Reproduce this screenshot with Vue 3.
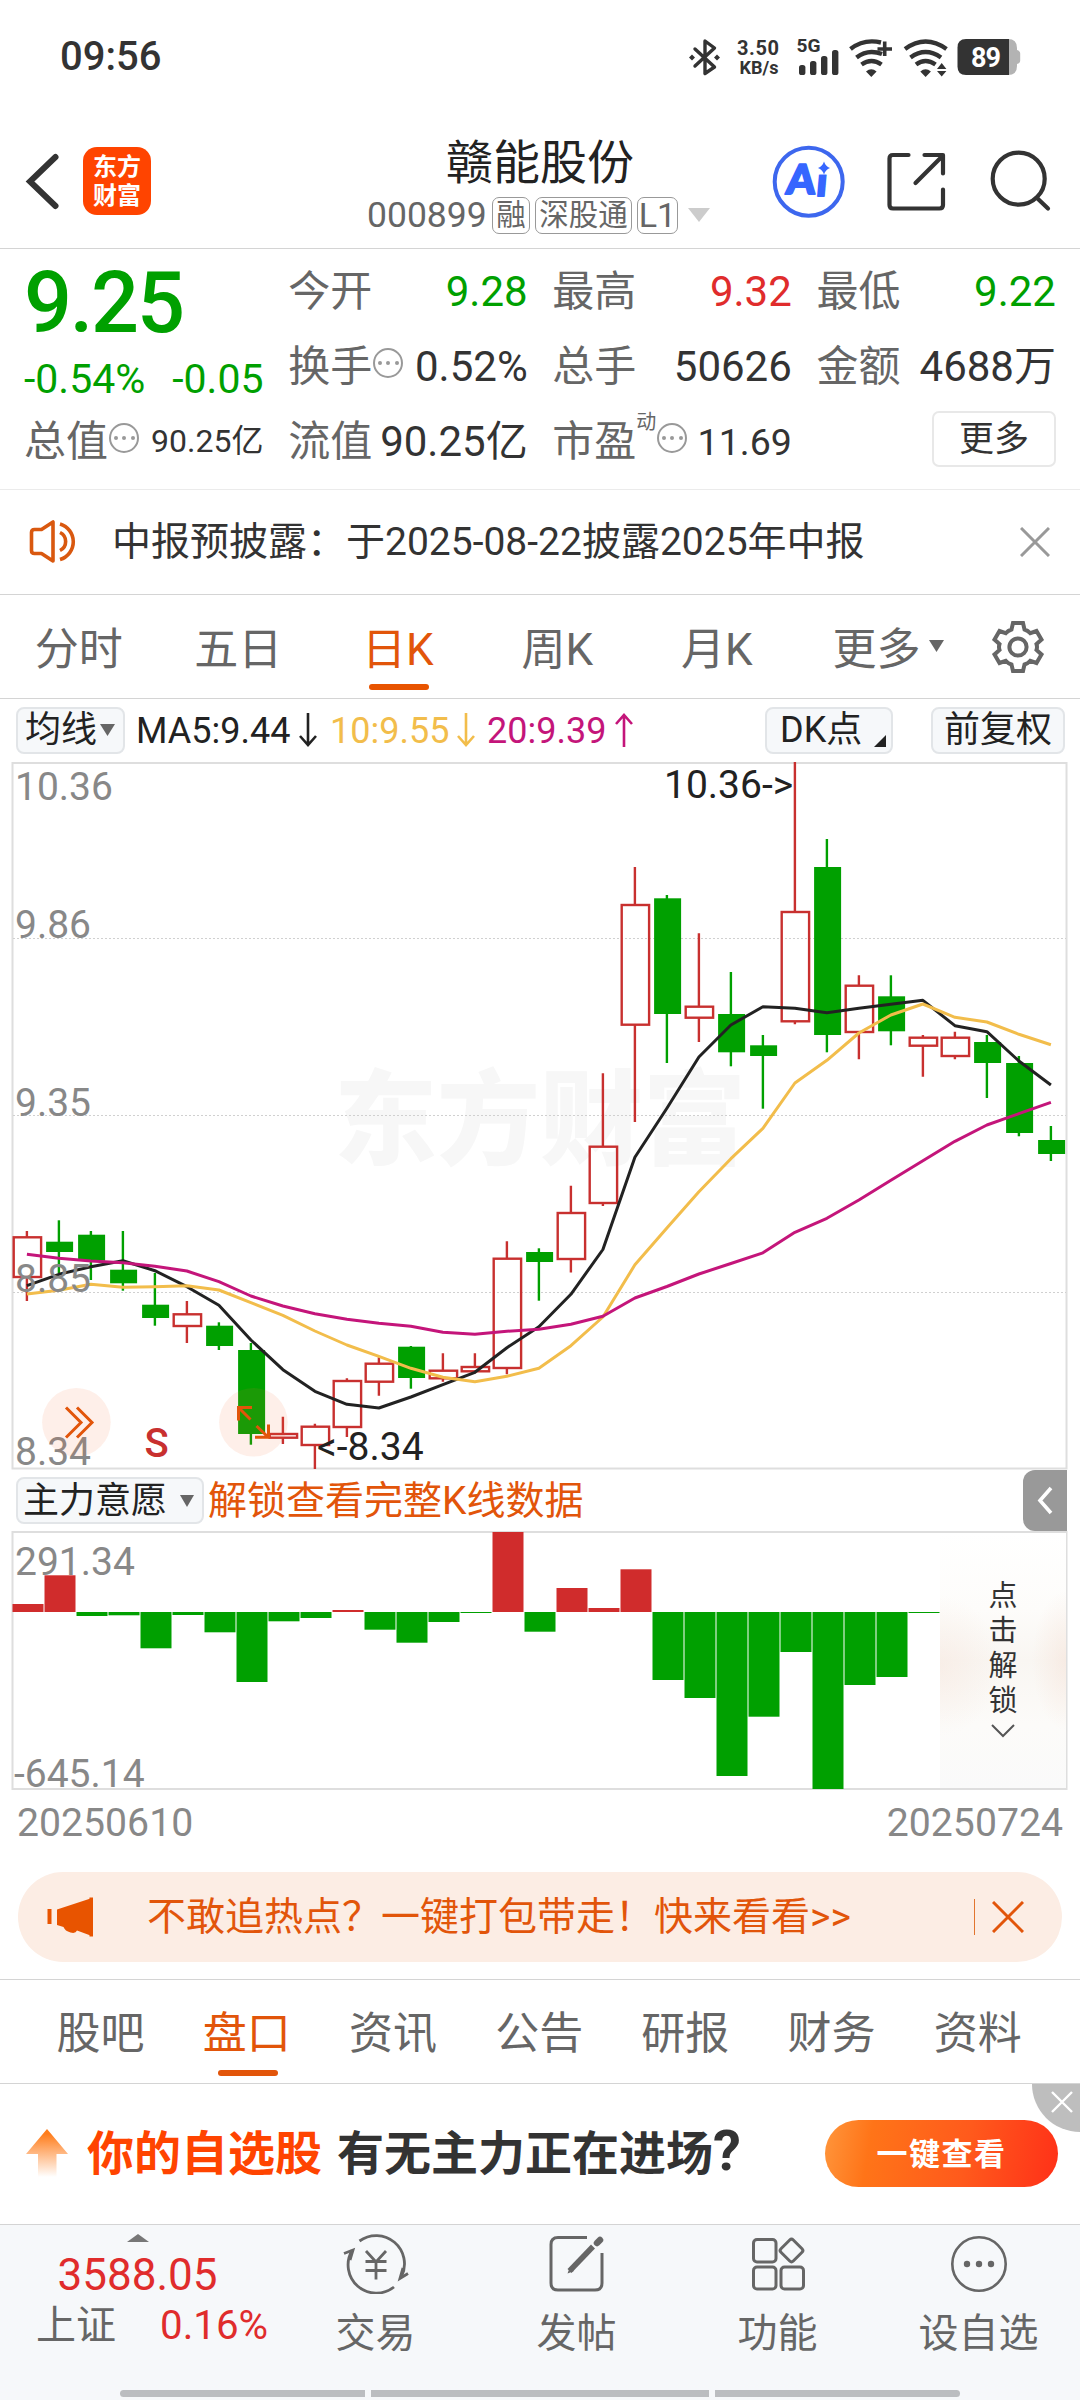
<script setup>
const UP = '#c8302f'
const DOWN = '#00a000'

// [direction, high, open/close top, open/close bottom, low] in chart pixels
const raw = [
  ['u', 1231, 1237.3, 1277, 1301], ['d', 1220.3, 1241.7, 1252, 1273], ['d', 1231, 1234.7, 1260.7, 1280],
  ['d', 1231, 1269.7, 1283.3, 1290.7], ['d', 1273, 1304.7, 1318, 1325.7], ['u', 1301, 1314.3, 1326, 1343],
  ['d', 1322.3, 1325.7, 1346, 1350], ['d', 1343, 1350, 1434, 1444.7], ['u', 1416.7, 1434, 1437.7, 1444],
  ['u', 1423.7, 1426.7, 1445, 1469], ['u', 1378.3, 1381, 1427, 1437], ['u', 1357.3, 1363.7, 1381.7, 1395.7],
  ['d', 1346, 1346.7, 1378, 1388.7], ['u', 1353.3, 1370.7, 1378.3, 1381.7], ['u', 1353.3, 1367, 1371.3, 1373.5],
  ['u', 1241.3, 1258.7, 1368, 1374.3], ['d', 1248.3, 1252, 1262, 1300.7], ['u', 1185.7, 1213, 1259, 1272.5],
  ['u', 1073.3, 1146.7, 1203, 1206], ['u', 867, 905, 1024.7, 1122], ['d', 895, 898.3, 1014, 1063],
  ['u', 933.3, 1006.7, 1017.7, 1042], ['d', 972, 1014, 1052.3, 1066.3], ['d', 1035, 1045.3, 1056, 1108.7],
  ['u', 762, 912, 1021.3, 1024.3], ['d', 839, 867, 1035, 1052.3], ['u', 975.3, 985.7, 1032, 1059.3],
  ['d', 975.3, 996.3, 1031.3, 1045.3], ['u', 1035, 1037.7, 1045.7, 1076.7], ['u', 1031.7, 1037.7, 1056, 1059.3],
  ['d', 1035, 1042, 1063, 1098], ['d', 1056, 1063, 1133, 1136.3], ['d', 1126, 1140, 1154, 1161]
]
const candles = raw.map((c, i) => ({ x: 26.9 + 32 * i, up: c[0] === 'u', hi: c[1], top: c[2], bot: c[3], lo: c[4] }))

const line = (ys) => ys.map((y, i) => `${(26.9 + 32 * i).toFixed(1)},${y}`).join(' ')
const averages = [
  { color: '#222', pts: line([1285.7, 1274.3, 1266.7, 1260.7, 1270.7, 1286.7, 1305.3, 1340, 1369.7, 1391.3, 1404.3, 1408, 1397, 1384.7, 1372.3, 1347.7, 1326.7, 1294.3, 1249.5, 1157.3, 1108.3, 1057, 1025, 1006.7, 1008.3, 1012.7, 1008.3, 1004.3, 1000.3, 1025.7, 1031.7, 1061, 1085]) },
  { color: '#f2bd4b', pts: line([1294, 1290.3, 1284.3, 1287.3, 1286.7, 1285.7, 1290, 1302.7, 1315.3, 1331, 1345, 1356.3, 1368.3, 1377.3, 1381.7, 1376.3, 1368.3, 1345.7, 1317, 1264.8, 1228, 1191.7, 1158.7, 1128.3, 1083, 1060.3, 1033, 1015, 1004, 1017.3, 1022, 1034.3, 1044.7]) },
  { color: '#c4157a', pts: line([1254.3, 1258.3, 1261, 1262.7, 1266.3, 1271, 1281.7, 1296, 1306, 1313.7, 1319.3, 1323.3, 1326.3, 1332.3, 1334.3, 1331.3, 1329.3, 1324.2, 1316.2, 1298, 1286.5, 1274, 1263.5, 1252.8, 1232.3, 1218.3, 1200, 1180.3, 1160.7, 1141.3, 1125, 1113.7, 1102.3]) }
]

// signed bar heights measured from the zero line
const flow = [8, 36.7, -4, -3.3, -36.3, -3, -20.3, -70, -9.3, -6, 2, -17.7, -30.7, -10, -1, 80, -19.7, 24, 4, 42.7, -68, -86, -164, -104.7, -40, -177, -73, -65, -1]
const bars = flow.map((v, i) => ({ x: 12.5 + 32 * i, y: v > 0 ? 1612 - v : 1612, h: Math.abs(v), up: v > 0 }))

const priceLabels = [['10.36', 800], ['9.86', 938], ['9.35', 1115.5], ['8.85', 1291.5], ['8.34', 1465]]
const periods = ['分时', '五日', '日K', '周K', '月K']
const sections = ['股吧', '盘口', '资讯', '公告', '研报', '财务', '资料']
</script>

<template>
  <div class="page">
    <div class="status">
      <span class="time">09:56</span>
      <svg class="status-icons" width="340" height="44" viewBox="684 35 340 44">
        <g fill="none" stroke="#333" stroke-width="3.4" stroke-linejoin="round" stroke-linecap="round">
          <path d="M695 49 L714.5 67 L705 73.5 V41 L714.5 48 L695 66" />
        </g>
        <path d="M689 57.5l3-3 3 3-3 3zM714 57.5l3-3 3 3-3 3z" fill="#333" />
        <g fill="#333" font-family="Roboto" font-weight="700">
          <text x="737" y="54.8" font-size="20" textLength="42">3.50</text>
          <text x="739.5" y="73.8" font-size="17.5" textLength="39" lengthAdjust="spacingAndGlyphs">KB/s</text>
          <text x="796.5" y="52.3" font-size="18" textLength="24" lengthAdjust="spacingAndGlyphs">5G</text>
        </g>
        <g fill="#333">
          <rect x="799" y="65" width="6.4" height="10" rx="2.6" /><rect x="810" y="61" width="6.4" height="14" rx="2.6" />
          <rect x="821" y="56" width="6.4" height="19" rx="2.6" /><rect x="832" y="50" width="6.4" height="25" rx="2.6" />
        </g>
        <g fill="none" stroke="#333" stroke-width="4.4">
          <path d="M850.5 49 Q864 38.5 881 42.5" /><path d="M856.5 57.5 Q868 48.5 882 54" /><path d="M861.5 64.5 Q871.5 57.5 881.5 64.5" />
          <path d="M877.5 49h14.5M884.7 41.5v14.5" stroke-width="3.6" />
          <path d="M905 49 Q925.5 34 946.5 49" /><path d="M910.5 57.5 Q925.5 46.5 941 57.5" /><path d="M916 64.5 Q925.5 57.5 935.5 64.5" />
        </g>
        <path d="M866 71.5q5.3-4.5 10.6 0l-5.3 5.5zM920.3 71.5q5.3-4.5 10.6 0l-5.3 5.5zM937 69l4.7-6 4.7 6zM937 71l4.7 5.5 4.7-5.5z" fill="#333" />
        <path d="M1004 39h4q9 0 9 9v2q3.2 1 3.2 3.5v7q0 2.5-3.2 3.5v2q0 9-9 9h-4z" fill="#b3b3b3" />
        <path d="M966 39h43v36h-43q-8.5 0-8.5-8.5v-19q0-8.5 8.5-8.5z" fill="#333" />
        <text x="971" y="66.5" fill="#fff" font-family="Roboto" font-weight="700" font-size="27" textLength="30">89</text>
      </svg>
    </div>

    <header class="header">
      <div class="head-left">
        <svg width="40" height="62" viewBox="22 150 40 62"><path d="M55.5 157 L30 181.5 L55.5 206" fill="none" stroke="#333" stroke-width="6" stroke-linecap="round" /></svg>
        <div class="logo"><span>东方</span><span>财富</span></div>
      </div>
      <div class="head-mid">
        <div class="stock">赣能股份</div>
        <div class="sub">
          <span class="code">000899</span><span class="tag t1">融</span><span class="tag t2">深股通</span><span class="tag t3">L1</span>
          <svg class="sub-arrow" width="22" height="14"><path d="M0 0h22L11 14z" fill="#ccc" /></svg>
        </div>
      </div>
      <svg class="head-icons" width="290" height="80" viewBox="770 142 290 80">
        <circle cx="808.7" cy="181.7" r="34" fill="#fff" stroke="#3d67ee" stroke-width="4" />
        <g font-family="Lato" font-weight="900" font-size="41" fill="#3666ff" stroke="#3666ff" stroke-width="2" stroke-linejoin="round">
          <text x="0" y="0" transform="translate(785.5 194) skewX(-5)">A</text>
          <text x="0" y="0" transform="translate(815.5 196) skewX(-5)">i</text>
        </g>
        <path d="M814 159h14l6 9v6.500h-20z" fill="#fff" />
        <path d="M824 161.5q1.500 4.800 6 6.500-4.500 1.700-6 6.500-1.500-4.800-6-6.500 4.500-1.700 6-6.500z" fill="#3666ff" />
        <g fill="none" stroke="#333" stroke-width="4.2" stroke-linecap="round" stroke-linejoin="round">
          <path d="M908.5 155H893q-3.5 0-3.5 3.5V205q0 3.5 3.5 3.5h46.5q3.5 0 3.5-3.5V189.500" />
          <path d="M924.5 155H943v18.5M943 155.500L915.500 183" />
          <circle cx="1018.7" cy="178.7" r="26" /><path d="M1037 198L1048 208.500" />
        </g>
      </svg>
    </header>

    <section class="quote">
      <div class="col">
        <div class="price">9.25</div>
        <div class="chg"><span>-0.54%</span><span>-0.05</span></div>
        <div class="cell"><span class="k">总值</span><i class="dots"><b></b><b></b><b></b></i><span class="v s">90.25亿</span></div>
      </div>
      <div class="col">
        <div class="cell"><span class="k">今开</span><span class="v g">9.28</span></div>
        <div class="cell"><span class="k">换手</span><i class="dots"><b></b><b></b><b></b></i><span class="v">0.52%</span></div>
        <div class="cell"><span class="k">流值</span><span class="v">90.25亿</span></div>
      </div>
      <div class="col">
        <div class="cell"><span class="k">最高</span><span class="v r">9.32</span></div>
        <div class="cell"><span class="k">总手</span><span class="v">50626</span></div>
        <div class="cell"><span class="k">市盈</span><span class="sup">动</span><i class="dots"><b></b><b></b><b></b></i><span class="v m">11.69</span></div>
      </div>
      <div class="col">
        <div class="cell"><span class="k">最低</span><span class="v g">9.22</span></div>
        <div class="cell"><span class="k">金额</span><span class="v">4688万</span></div>
        <div class="cell end"><span class="more">更多</span></div>
      </div>
    </section>

    <section class="notice">
      <svg width="54" height="48" viewBox="28 518 54 48" fill="none" stroke="#d9580f" stroke-width="3.6" stroke-linejoin="round">
        <path d="M53 522V561L41.5 553.5H34.5q-3 0-3-3V532.5q0-3 3-3h7z" /><path d="M60 532.5a10 10 0 0 1 0 18M60 524a18.500 18.500 0 0 1 0 35.500" />
      </svg>
      <span class="notice-text">中报预披露：于2025-08-22披露2025年中报</span>
      <svg class="notice-x" width="30" height="30" fill="none" stroke="#999" stroke-width="3"><path d="M1 1l28 28M29 1L1 29" /></svg>
    </section>

    <nav class="periods">
      <div v-for="p in periods" :key="p" class="period" :class="{ on: p === '日K' }"><span>{{ p }}</span></div>
      <div class="period wide"><span>更多</span><svg width="15" height="12"><path d="M0 0h15L7.5 12z" fill="#666" /></svg></div>
      <svg class="gear" width="56" height="56" viewBox="-28 -28 56 56" fill="none" stroke="#666" stroke-width="4" stroke-linejoin="miter">
        <path d="M-5-24H5L6.5-17.5Q10-16.5 12.3-13.8L18.5-16 23.5-7.5 18.5-3Q19.5 0 18.5 3L23.5 7.5 18.5 16 12.3 13.8Q10 16.5 6.5 17.5L5 24H-5L-6.5 17.5Q-10 16.5-12.3 13.8L-18.5 16-23.5 7.5-18.5 3Q-19.5 0-18.5-3L-23.5-7.5-18.5-16-12.3-13.8Q-10-16.5-6.5-17.5Z" />
        <circle r="8.6" />
      </svg>
    </nav>

    <div class="ma">
      <span class="chip c-ma">均线<svg width="15" height="12"><path d="M0 0h15L7.5 12z" fill="#666" /></svg></span>
      <span class="m m5">MA5:9.44</span>
      <svg width="18" height="36" fill="none" stroke="#222" stroke-width="2.6"><path d="M9 1v32M1 24l8 9 8-9" /></svg>
      <span class="m m10">10:9.55</span>
      <svg width="18" height="36" fill="none" stroke="#f2bd4b" stroke-width="2.6"><path d="M9 1v32M1 24l8 9 8-9" /></svg>
      <span class="m m20">20:9.39</span>
      <svg width="18" height="36" fill="none" stroke="#c4157a" stroke-width="2.6"><path d="M9 35V3M1 12l8-9 8 9" /></svg>
      <span class="chip c-dk">DK点<svg width="12" height="12"><path d="M12 0v12H0z" fill="#222" /></svg></span>
      <span class="chip c-fq">前复权</span>
    </div>

    <svg class="chart" width="1080" height="708" viewBox="0 762 1080 708">
      <rect x="12.5" y="763" width="1054" height="705.5" fill="none" stroke="#dedede" stroke-width="2" />
      <text x="334" y="1157" class="mark">东方财富</text>
      <g stroke="#d0d0d0" stroke-width="1.2" stroke-dasharray="2 2">
        <path d="M13 938.5H1066M13 1115.5H1066M13 1292.5H1066" />
      </g>
      <g v-for="(c, i) in candles" :key="i">
        <template v-if="c.up">
          <path :d="`M${c.x} ${c.hi}V${c.top}M${c.x} ${c.bot}V${c.lo}`" :stroke="UP" stroke-width="2.4" />
          <rect :x="c.x - 13.2" :y="c.top" width="27.4" :height="c.bot - c.top" fill="none" :stroke="UP" stroke-width="2.4" />
        </template>
        <template v-else>
          <path :d="`M${c.x} ${c.hi}V${c.lo}`" :stroke="DOWN" stroke-width="2.4" />
          <rect :x="c.x - 12.8" :y="c.top" width="27" :height="c.bot - c.top" :fill="DOWN" />
        </template>
      </g>
      <polyline v-for="a in averages" :key="a.color" :points="a.pts" fill="none" :stroke="a.color" stroke-width="3" stroke-linejoin="round" />
      <g class="lab">
        <text v-for="p in priceLabels" :key="p[0]" x="15" :y="p[1]">{{ p[0] }}</text>
      </g>
      <text x="664" y="798" class="tip">10.36-&gt;</text>
      <text x="317" y="1459.500" class="tip">&lt;-8.34</text>
      <text x="144.5" y="1457" class="sell">S</text>
      <circle cx="76.4" cy="1422.3" r="34.3" fill="#f9703a" fill-opacity=".11" />
      <circle cx="253.4" cy="1422.3" r="34.3" fill="#f9703a" fill-opacity=".11" />
      <g fill="none" stroke="#e2550a" stroke-width="3">
        <path d="M66 1407.5L81 1422.5L66 1437.5M77 1407.5L92 1422.5L77 1437.5" />
        <path d="M252 1407.5H238.5V1420.5M239 1408L250.5 1419.5M255 1437.3H268.5V1424.5M268 1437L256.5 1426" />
      </g>
    </svg>

    <div class="intent">
      <span class="chip c-int">主力意愿<svg width="14" height="12"><path d="M0 0h14L7 12z" fill="#666" /></svg></span>
      <span class="unlock">解锁查看完整K线数据</span>
      <span class="toggle"><svg width="16" height="29" fill="none" stroke="#fff" stroke-width="3.6"><path d="M14 2L3 14.5L14 27" /></svg></span>
    </div>

    <div class="flowbox">
      <svg class="chart" width="1080" height="259" viewBox="0 1531 1080 259">
        <rect x="12.5" y="1532" width="1054" height="257" fill="none" stroke="#dedede" stroke-width="2" />
        <g class="lab"><text x="15" y="1574.5">291.34</text><text x="14" y="1786.5">-645.14</text></g>
        <rect v-for="(b, i) in bars" :key="i" :x="b.x" :y="b.y" width="31" :height="b.h" :fill="b.up ? '#d02c2c' : DOWN" />
      </svg>
      <div class="locker">
        <span>点</span><span>击</span><span>解</span><span>锁</span>
        <svg width="24" height="14" fill="none" stroke="#555" stroke-width="2"><path d="M1 1l11 11L23 1" /></svg>
      </div>
    </div>
    <div class="dates"><span>20250610</span><span>20250724</span></div>

    <div class="banner">
      <svg width="48" height="42" viewBox="46 1896 48 42" fill="#e85400"><path d="M47.5 1909h4v15h-4zM57 1909.5L90.5 1898.5V1935.5L77 1930.5Q75.5 1934 70.5 1932.5 65 1931 63.5 1927L57 1925z" /><path d="M89.5 1897.5h3.5v39h-3.500z" /></svg>
      <span class="banner-text">不敢追热点？一键打包带走！快来看看&gt;&gt;</span>
      <i class="bar"></i>
      <svg class="bx" width="32" height="32" fill="none" stroke="#e2550a" stroke-width="3"><path d="M1 1l30 30M31 1L1 31" /></svg>
    </div>

    <nav class="sections">
      <div v-for="s in sections" :key="s" class="section" :class="{ on: s === '盘口' }">{{ s }}</div>
    </nav>

    <section class="promo">
      <svg width="42" height="48" viewBox="0 0 42 48"><defs><linearGradient id="up" x1="0" y1="0" x2="0" y2="1"><stop offset=".1" stop-color="#ff7d1c" /><stop offset="1" stop-color="#ff7d1c" stop-opacity="0" /></linearGradient></defs><path d="M21 0L42 25H30.5V48H12V25H0z" fill="url(#up)" /></svg>
      <span class="p1">你的自选股</span><span class="p2">有无主力正在进场<b>?</b></span>
      <span class="cta">一键查看</span>
      <span class="corner"><svg width="22" height="22" fill="none" stroke="#fff" stroke-width="2.4"><path d="M1 1l20 20M21 1L1 21" /></svg></span>
    </section>

    <footer class="foot">
      <div class="foot-row">
        <div class="index">
          <svg width="22" height="8"><path d="M0 8L11 0l11 8z" fill="#777" /></svg>
          <div class="idx">3588.05</div>
          <div class="idx2"><span>上证</span><b>0.16%</b></div>
        </div>
        <div class="nav">
          <svg width="68" height="60" viewBox="-34 -30 68 60" fill="none" stroke="#666" stroke-width="2.8">
            <path d="M-16.5-23A28.3 28.3 0 0 1 25.5 12.5M18 23A28.3 28.3 0 0 1-24-13.5" /><path d="M-32-10.5L-23-14 -26-4M32 9.5L24 14.5 27 4" />
            <path d="M-10-13L0-2 10-13M-10.5-2.5H10.5M-10.5 6.5H10.5M0-2V15.5" />
          </svg>
          <span>交易</span>
        </div>
        <div class="nav">
          <svg width="60" height="60" viewBox="-30 -30 60 60" fill="none" stroke="#666" stroke-width="3">
            <path d="M10-26.5H-19q-7 0-7 7V19q0 7 7 7H18q7 0 7-7V-11" />
            <path d="M-7.5 7L16-17.5" stroke-width="5.5" /><path d="M-9.5 9.5L-3 7-7 3z" fill="#666" stroke="none" /><path d="M20-21L23-24" stroke-width="6.5" stroke-linecap="round" />
          </svg>
          <span>发帖</span>
        </div>
        <div class="nav">
          <svg width="60" height="60" viewBox="-30 -30 60 60" fill="none" stroke="#666" stroke-width="3">
            <rect x="-24.5" y="-24.5" width="22.5" height="22.5" rx="3.5" /><rect x="-24.5" y="3" width="22.5" height="22" rx="3.5" /><rect x="3" y="3" width="22.5" height="22" rx="3.5" />
            <rect x="-8.7" y="-8.7" width="17.4" height="17.4" rx="2.5" transform="translate(13.5 -13.5) rotate(45)" />
          </svg>
          <span>功能</span>
        </div>
        <div class="nav">
          <svg width="60" height="60" viewBox="-30 -30 60 60" fill="none" stroke="#666" stroke-width="2.6">
            <circle r="26.7" /><g fill="#666" stroke="none"><circle cx="-12" r="3.2" /><circle r="3.2" /><circle cx="12" r="3.2" /></g>
          </svg>
          <span>设自选</span>
        </div>
      </div>
      <div class="home"><i></i><i class="mid"></i><i></i></div>
    </footer>
  </div>
</template>

<style>
body { background: #fff; }
</style>

<style scoped>
.page { width: 1080px; height: 2400px; overflow: hidden; background: #fff; font-family: Roboto, "Noto Sans CJK SC", sans-serif; color: #333; display: flex; flex-direction: column; }
.page * { box-sizing: border-box; }
.page > * { flex: none; }
svg { display: block; flex: none; }
span { white-space: nowrap; }

.status { height: 112px; display: flex; align-items: flex-start; justify-content: space-between; padding: 35px 56px 0 60px; }
.time { font-size: 40px; font-weight: 500; line-height: 43px; }

.header { height: 137px; border-bottom: 1px solid #d4d4d4; display: grid; grid-template-columns: 360px 400px 320px; align-items: start; }
.head-left { display: flex; align-items: center; padding: 35px 0 0 22px; gap: 21px; height: 103px; }
.logo { width: 68px; height: 68px; border-radius: 14px; background: #ff4400; color: #fff; font-family: "Noto Sans CJK SC", sans-serif; font-weight: 700; font-size: 24px; line-height: 29px; display: flex; flex-direction: column; align-items: center; padding-top: 3px; }
.head-mid { padding-top: 24px; }
.stock { font-size: 47px; line-height: 54px; color: #222; padding-left: 86px; }
.sub { display: flex; align-items: center; height: 50px; color: #666; padding-left: 7px; }
.code { font-size: 35.5px; width: 125px; }
.tag { border: 1.5px solid #999; border-radius: 7px; height: 37px; line-height: 35px; font-size: 29.5px; text-align: center; display: flex; justify-content: center; }
.t1 { width: 38px; margin-right: 5px; }
.t2 { width: 97px; margin-right: 5px; }
.t3 { width: 41px; font-size: 34px; margin-right: 10px; }
.head-icons { margin: 30px 0 0 10px; }

.quote { height: 241px; padding: 5px 24px 0; border-bottom: 1px solid #ebebeb; display: flex; justify-content: space-between; }
.col { width: 239.5px; }
.price { font-size: 84.5px; font-weight: 500; line-height: 100px; color: #00a000; height: 100px; letter-spacing: -2.2px; }
.chg { height: 50px; line-height: 50px; font-size: 41px; color: #00a000; display: flex; justify-content: space-between; }
.cell { height: 75px; display: flex; align-items: center; line-height: 75px; }
.k { font-size: 42px; color: #666; }
.v { font-size: 42px; color: #333; margin-left: auto; }
.v.g { color: #00a000; }
.v.r { color: #e02c2c; }
.v.s { font-size: 32px; }
.v.m { font-size: 37.5px; }
.dots { width: 30px; height: 30px; border: 2px solid #999; border-radius: 50%; display: flex; align-items: center; justify-content: center; gap: 4.5px; margin: -8px 0 0 1px; }
.dots b { width: 4px; height: 4px; border-radius: 50%; background: #999; }
.sup { font-size: 20px; line-height: 24px; color: #666; align-self: flex-start; margin-top: 6px; }
.end { justify-content: flex-end; }
.more { width: 124px; height: 56px; border: 2px solid #e8e8e8; border-radius: 7px; font-size: 35px; line-height: 54px; text-align: center; margin-top: -6px; }

.notice { height: 105px; border-bottom: 1px solid #d4d4d4; display: flex; align-items: center; padding: 0 30px 0 28px; }
.notice-text { font-size: 39px; margin-left: 30px; line-height: 60px; }
.notice-x { margin-left: auto; }

.periods { height: 104px; border-bottom: 1px solid #d4d4d4; display: flex; }
.period { width: 159.5px; font-size: 44px; height: 95px; padding-top: 14px; color: #666; display: flex; justify-content: center; align-items: center; position: relative; }
.period span { margin-left: -2px; line-height: 80px; }
.period.on { color: #e2550a; }
.period.on::after { content: ""; position: absolute; bottom: 0; left: 50%; margin-left: -30px; width: 60px; height: 6px; border-radius: 3px; background: #e85400; }
.wide { width: 183px; }
.wide svg { margin: -7px 0 0 8px; }
.gear { margin: 24px 0 0 9px; }

.ma { height: 63px; display: flex; align-items: center; padding: 0 15px 1px 16px; }
.chip { height: 47px; border: 2px solid #e2e5e8; border-radius: 8px; background: #f6f8fa; color: #222; font-size: 36px; line-height: 44px; display: flex; align-items: center; }
.c-ma { width: 109px; padding-left: 7px; }
.c-ma svg { margin-left: 3px; }
.c-dk { width: 128px; padding-left: 13px; margin-left: auto; }
.c-dk svg { margin: 22px 0 0 12px; }
.c-fq { width: 134px; justify-content: center; margin-left: 38px; }
.m { font-size: 36px; line-height: 50px; padding-top: 1px; }
.m5 { width: 164px; padding-left: 10px; color: #222; margin: 0 9px 0 1px; }
.m10 { color: #f2bd4b; width: 127px; margin-left: 13px; }
.m20 { color: #c4157a; width: 128px; margin-left: 12px; }

.chart { overflow: visible; }
.lab text { font-size: 39px; fill: #888; }
.tip { font-size: 39px; fill: #222; }
.sell { font-size: 40px; font-weight: 500; fill: #c8302f; }
.mark { font-family: "Noto Sans CJK SC", sans-serif; font-weight: 900; font-size: 103px; fill: #f7f7f7; }

.intent { height: 61px; display: flex; align-items: center; padding: 0 13px 0 16px; }
.c-int { width: 188px; padding-left: 5px; }
.c-int svg { margin-left: 13px; }
.unlock { font-size: 39px; color: #e2550a; margin-left: 4px; line-height: 61px; padding-top: 1px; }
.toggle { margin-left: auto; width: 44px; height: 61px; background: #999; border-radius: 12px 0 0 12px; display: flex; align-items: center; justify-content: center; }

.flowbox { position: relative; height: 259px; }
.locker { position: absolute; left: 940px; top: 2px; width: 126px; height: 255px; padding-top: 46px; display: flex; flex-direction: column; align-items: center; font-size: 29px; line-height: 35px; color: #333; background: radial-gradient(ellipse 60px 70px at 0 52%, rgba(246, 228, 218, .45), rgba(246, 228, 218, 0)), radial-gradient(ellipse 34px 70px at 100% 50%, rgba(246, 228, 218, .6), rgba(246, 228, 218, 0)), linear-gradient(#fff, #fdfcfa 30%, #f9f6f2 50%, #fcfbf9 75%, #fafafa); }
.locker svg { margin-top: 5px; }
.dates { height: 82px; padding: 0 17px 14px; display: flex; justify-content: space-between; font-size: 39.2px; line-height: 66px; color: #888; }

.banner { width: 1044px; height: 90px; margin: 0 18px 17px; border-radius: 45px; background: #fcede4; display: flex; align-items: center; color: #e2550a; padding-left: 28px; }
.banner-text { font-size: 39px; margin-left: 53px; line-height: 60px; }
.bar { width: 1.5px; height: 36px; background: #e2752f; margin-left: auto; }
.bx { margin: 0 38px 0 17px; }

.sections { height: 105px; border-top: 1px solid #d4d4d4; border-bottom: 1px solid #d4d4d4; display: flex; padding-left: 27.5px; }
.section { width: 146.2px; height: 96px; text-align: center; font-size: 44px; line-height: 108px; color: #666; position: relative; }
.section.on { color: #e2550a; }
.section.on::after { content: ""; position: absolute; bottom: 0; left: 50%; margin-left: -29px; width: 60px; height: 6px; border-radius: 3px; background: #e2550a; }

.promo { height: 141px; border-bottom: 1px solid #d4d4d4; display: flex; align-items: center; padding: 0 22px 2px 26px; position: relative; font-family: "Noto Sans CJK SC", sans-serif; font-weight: 700; }
.p1, .p2 { font-size: 47px; line-height: 60px; padding-bottom: 7px; }
.p1 { color: #ff4400; margin-left: 19px; }
.p2 { color: #333; margin-left: 15px; }
.p2 b { font-family: Roboto, sans-serif; font-size: 56px; line-height: 50px; font-weight: 700; }
.cta { margin-left: auto; width: 233px; height: 67px; border-radius: 34px; background: linear-gradient(100deg, #ff963c, #ff7418 20%, #ff5a1c 60%, #ff3018); color: #fff; font-size: 31px; letter-spacing: 1.5px; line-height: 64px; text-align: center; }
.corner { position: absolute; right: 0; top: 0; width: 48px; height: 48px; border-bottom-left-radius: 48px; background: #bebebe; padding: 7px 0 0 19px; }

.foot { height: 175px; background: #f6f8fa; display: flex; flex-direction: column; }
.foot-row { display: flex; height: 165px; }
.index { width: 275px; display: flex; flex-direction: column; align-items: center; padding-top: 9px; color: #e02c2c; }
.idx { font-size: 44px; line-height: 50px; margin-top: 8px; }
.idx2 { font-size: 40.3px; line-height: 50px; display: flex; width: 275px; padding-left: 36px; margin-top: 1px; }
.idx2 span { font-size: 40px; color: #666; }
.idx2 b { font-weight: 400; margin-left: 44px; }
.nav { width: 201px; display: flex; flex-direction: column; align-items: center; padding-top: 9px; color: #666; font-size: 40px; }
.nav span { line-height: 50px; margin-top: 15px; }
.home { display: flex; gap: 6px; padding-left: 120px; }
.home i { width: 245px; height: 7px; background: #bbbdc0; border-radius: 4px 0 0 4px; }
.home i.mid { width: 338px; border-radius: 0; }
.home i:last-child { border-radius: 0 4px 4px 0; }
</style>
